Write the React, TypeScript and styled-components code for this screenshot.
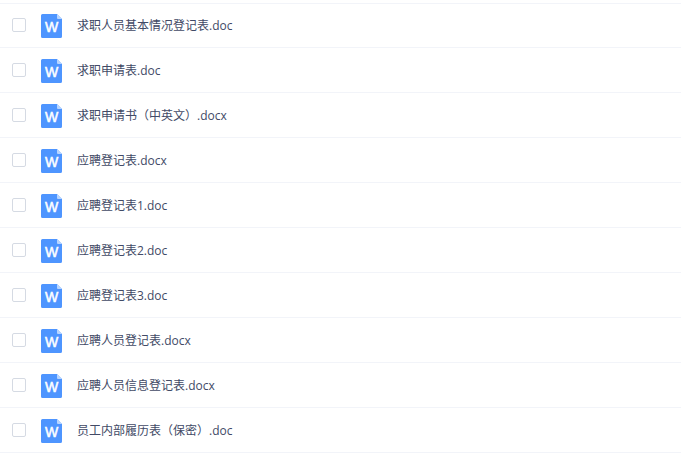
import React from "react";
import styled, { createGlobalStyle } from "styled-components";

const GlobalStyle = createGlobalStyle`
  * { box-sizing: border-box; }
  body {
    margin: 0;
    background: #ffffff;
    color: #424a66;
    font-family: "Open Sans", "Noto Sans CJK SC", sans-serif;
    font-size: 12px;
  }
`;

const FileList = styled.ul`
  list-style: none;
  margin: 0;
  padding: 3px 0 0;
`;

const FileRow = styled.li`
  height: 45px;
  border-bottom: 1px solid #f2f4f9;
  &:first-child { box-shadow: inset 0 1px 0 #f2f4f9; }
`;

const RowLabel = styled.label`
  display: flex;
  align-items: center;
  height: 100%;
  padding-left: 12px;
`;

const CheckBox = styled.input`
  appearance: none;
  flex: none;
  width: 14px;
  height: 14px;
  margin: 0 15px 0 0;
  border: 1px solid #d5dae3;
  border-radius: 2px;
  background: #ffffff;
  &:checked { background: #4e95ff; border-color: #4e95ff; }
`;

const DocIcon = styled.svg`
  flex: none;
  width: 21px;
  height: 24px;
  margin: 2px 15px 0 0;
`;

const IconLetter = styled.text`
  fill: #ffffff;
  stroke: #ffffff;
  stroke-width: 0.5px;
  font-family: "Liberation Sans", Arial, sans-serif;
  font-size: 14px;
  text-anchor: middle;
`;

const FileName = styled.span`
  padding-top: 2px;
  line-height: 18px;
  white-space: nowrap;
`;

const files = [
  "求职人员基本情况登记表.doc",
  "求职申请表.doc",
  "求职申请书（中英文）.docx",
  "应聘登记表.docx",
  "应聘登记表1.doc",
  "应聘登记表2.doc",
  "应聘登记表3.doc",
  "应聘人员登记表.docx",
  "应聘人员信息登记表.docx",
  "员工内部履历表（保密）.doc",
];

function WordIcon() {
  return (
    <DocIcon viewBox="0 0 21 24" aria-hidden="true">
      <path d="M1.5 0H16L21 5V22.5a1.5 1.5 0 0 1-1.5 1.5H1.5A1.5 1.5 0 0 1 0 22.5V1.5A1.5 1.5 0 0 1 1.5 0z" fill="#4e95ff" />
      <path d="M16 0L21 5H17a1 1 0 0 1-1-1z" fill="#b8d5ff" />
      <IconLetter x="10.5" y="18">W</IconLetter>
    </DocIcon>
  );
}

export default function App() {
  return (
    <>
      <GlobalStyle />
      <FileList>
        {files.map((name) => (
          <FileRow key={name}>
            <RowLabel>
              <CheckBox type="checkbox" />
              <WordIcon />
              <FileName>{name}</FileName>
            </RowLabel>
          </FileRow>
        ))}
      </FileList>
    </>
  );
}
